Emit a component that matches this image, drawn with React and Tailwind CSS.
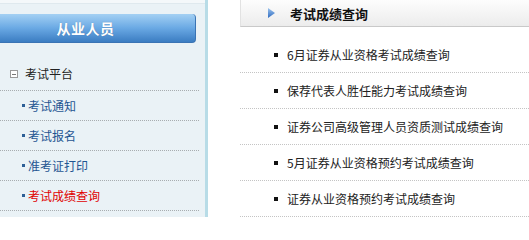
import React from "react";

const leftItems = [
  { t: "考试通知" },
  { t: "考试报名" },
  { t: "准考证打印" },
  { t: "考试成绩查询", active: true },
];

const rightItems = [
  "6月证券从业资格考试成绩查询",
  "保荐代表人胜任能力考试成绩查询",
  "证券公司高级管理人员资质测试成绩查询",
  "5月证券从业资格预约考试成绩查询",
  "证券从业资格预约考试成绩查询",
];

export default function App() {
  return (
    <div
      className="flex w-[529px] h-[217px] overflow-hidden bg-white"
      style={{ fontFamily: '"SimSun", "Noto Sans CJK SC", sans-serif' }}
    >
      {/* left panel */}
      <div className="w-[208px] shrink-0 h-full bg-[#eaf2f6] border-r-[3px] border-[#b8dce7] flex flex-col">
        <div className="h-[4px] bg-[#f4f8fa] border-b border-[#dfe9ee]" />
        <div className="mt-[10px] w-[196px] h-[29px] rounded-r-[4px] border-r border-b border-[#3a74b4] bg-gradient-to-b from-[#a3d0f3] via-[#6aa9e4] to-[#3b7dc2] flex items-center justify-center pr-[24px]">
          <span className="text-white font-bold text-[14px] leading-none tracking-[0.5px] [text-shadow:0_0_1px_rgba(0,0,0,0.25)]">
            从业人员
          </span>
        </div>
        <div className="mt-[21px] w-[199px] pb-[6px] border-b border-dotted border-[#a8adb0]">
          <div className="h-[20px] flex items-center pl-[10px]">
            <span className="w-[8px] h-[8px] border border-[#9a9a9a] bg-white flex items-center justify-center">
              <span className="w-[4px] h-px bg-[#777]" />
            </span>
            <span className="ml-[7px] text-[12px] leading-none text-[#222]">考试平台</span>
          </div>
        </div>
        {leftItems.map((it) => (
          <div
            key={it.t}
            className="w-[199px] h-[30px] border-b border-dotted border-[#a8adb0] flex items-center pl-[22px]"
          >
            <span className={`w-[3px] h-[3px] ${it.active ? "bg-[#2d5f96]" : "bg-[#2d5f96]"}`} />
            <span
              className={`ml-[3px] text-[12px] leading-none ${
                it.active ? "text-[#e00000]" : "text-[#1f5592]"
              }`}
            >
              {it.t}
            </span>
          </div>
        ))}
      </div>

      {/* right panel */}
      <div className="flex-1 h-full pl-[32px] flex flex-col">
        <div className="h-[28px] border-l border-b border-l-[#e2e2e2] border-b-[#c9c9c9] bg-gradient-to-b from-[#fdfdfd] to-[#ececec] flex items-center pl-[27px]">
          <svg width="8" height="10" viewBox="0 0 8 10" className="shrink-0">
            <defs>
              <linearGradient id="tri" x1="0" y1="0" x2="0" y2="1">
                <stop offset="0" stopColor="#9cc4ee" />
                <stop offset="1" stopColor="#2f6bc0" />
              </linearGradient>
            </defs>
            <polygon points="0,0 7,5 0,10" fill="url(#tri)" />
          </svg>
          <span className="ml-[14px] text-[13px] font-bold leading-none text-[#111]">考试成绩查询</span>
        </div>
        <div className="mt-[10px] flex flex-col">
          {rightItems.map((t) => (
            <div
              key={t}
              className="h-[36px] border-b border-dotted border-[#c4c4c4] flex items-center pl-[34px]"
            >
              <span className="w-[4px] h-[4px] bg-[#111] shrink-0" />
              <span className="ml-[9px] text-[12px] leading-none text-[#222] whitespace-nowrap">{t}</span>
            </div>
          ))}
        </div>
      </div>
    </div>
  );
}
